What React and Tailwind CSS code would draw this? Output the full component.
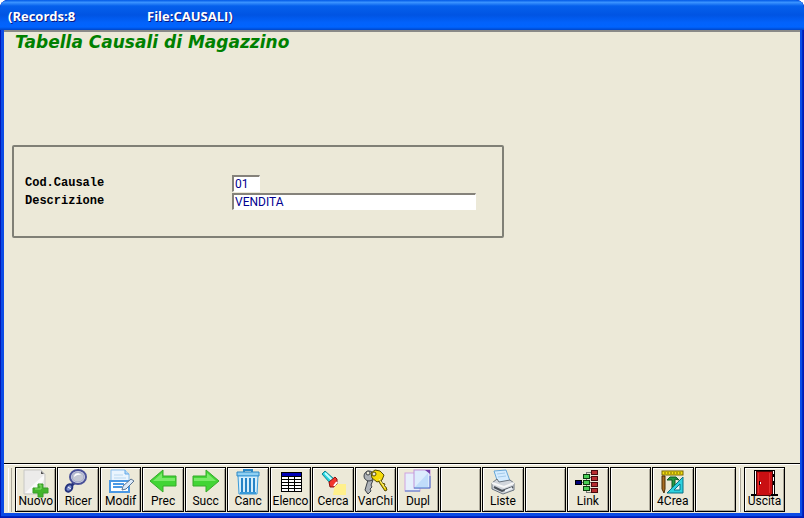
import React, { useState } from "react";

const icons = {
  nuovo: (
    <>
      <path d="M2 1h17l4 4v20H2z" fill="#ecebea" stroke="#c8c8c4" />
      <path d="M3 24h12L22 10V6l-9 8z" fill="#fafafa" />
      <path d="M19 2l3 3h-3z" fill="#555" />
      <path d="M16 15h5v4h5v5h-5v4h-5v-4h-5v-5h5z" fill="#43b52c" stroke="#3a9c28" />
      <path d="M17 16h2v4h-6" fill="none" stroke="#85dd6b" />
    </>
  ),
  ricer: (
    <>
      <path d="M11 13l-5 5" stroke="#27347e" strokeWidth="3" />
      <ellipse cx="5" cy="19" rx="3" ry="4" transform="rotate(35 5 19)" fill="#7d90d0" stroke="#25347c" strokeWidth="2" />
      <path d="M4 18l3 2" stroke="#fff" />
      <ellipse cx="14" cy="8" rx="8" ry="7" fill="#e8e8f0" stroke="#4a5298" strokeWidth="2" />
      <ellipse cx="14" cy="8" rx="6" ry="5" fill="#c4c8d4" stroke="#9aa2c8" />
      <path d="M10 8c0-4 5-5 7-2-4-1-5 1-7 2z" fill="#fff" />
    </>
  ),
  modif: (
    <>
      <path d="M4 1h14l4 4v18H4z" fill="#eaf5fe" stroke="#8cc0ee" />
      <path d="M18 1v4h4" fill="#b5d8f5" stroke="#62a9e8" />
      <path d="M7 6h9M7 9h12" stroke="#b9d8f0" />
      <rect x="3" y="12" width="19" height="11" fill="#fff" stroke="#4a98e4" strokeWidth="2" />
      <path d="M6 15h11M6 18h9" stroke="#4a98e4" strokeWidth="2" />
      <path d="M15 21l1-4 8-7 3 2-8 8z" fill="#dceafa" stroke="#5a7490" />
    </>
  ),
  prec: (
    <>
      <path d="M1 12L14 1v6h13v10H14v6z" fill="#42d535" stroke="#36aa2a" />
      <path d="M4 12l9-8v5h13v3z" fill="#7aea68" />
    </>
  ),
  succ: (
    <>
      <path d="M27 12L14 1v6H1v10h13v6z" fill="#42d535" stroke="#36aa2a" />
      <path d="M24 12l-9-8v5H2v3z" fill="#7aea68" />
    </>
  ),
  canc: (
    <>
      <path d="M10 3V1h8v2" fill="none" stroke="#2c87c4" strokeWidth="2" />
      <path d="M3 3h22v4H3z" fill="#8fd0f3" stroke="#2c87c4" />
      <path d="M4 7h20l-1 18H5z" fill="#d5effc" stroke="#3a9ad8" />
      <path d="M8 9v14M12 9v14M16 9v14M20 9v14" stroke="#2683c6" strokeWidth="2" />
      <path d="M6 24h16" stroke="#3a9ad8" strokeWidth="2" />
    </>
  ),
  elenco: (
    <g shapeRendering="crispEdges">
      <rect x="4" y="3" width="21" height="20" fill="#000" />
      <rect x="5" y="4" width="19" height="3" fill="#0000b8" />
      <path d="M5 8h6v2H5zM12 8h5v2h-5zM18 8h6v2h-6zM5 11h6v2H5zM12 11h5v2h-5zM18 11h6v2h-6zM5 14h6v2H5zM12 14h5v2h-5zM18 14h6v2h-6zM5 17h6v2H5zM12 17h5v2h-5zM18 17h6v2h-6zM5 20h6v2H5zM12 20h5v2h-5zM18 20h6v2h-6z" fill="#fff" />
    </g>
  ),
  cerca: (
    <>
      <path d="M16 15h11v11H14z" fill="#fff08c" />
      <path d="M3 5l3-3 9 8-4 4z" fill="#24d5e0" stroke="#16828c" />
      <path d="M6 4l8 8" stroke="#c2ffff" strokeWidth="2" />
      <path d="M10 13l6-5 2 2v5l-3 3h-4z" fill="#f2362c" stroke="#8b100c" />
      <path d="M15 17l3-4" stroke="#fff" strokeWidth="2" />
    </>
  ),
  varchi: (
    <>
      <path d="M7 11L4 21l3 4 3-3-1-2 2-2-1-2 2-5z" fill="#adb2b8" stroke="#3d4248" />
      <circle cx="8" cy="7" r="5" fill="#adb2b8" stroke="#3d4248" />
      <circle cx="7" cy="4" r="2" fill="#ecead8" stroke="#3d4248" />
      <path d="M16 10l8 12 2-1-1-3-2-1 1-2-3-1-1-4z" fill="#ecd000" stroke="#554b00" />
      <path d="M10 4l4-3 5 1 4 4-2 5-5 2-5-4z" fill="#f6dc08" stroke="#554b00" />
      <circle cx="13" cy="5" r="2" fill="#ecead8" stroke="#554b00" />
      <path d="M18 10l6 9" stroke="#fff38e" />
    </>
  ),
  dupl: (
    <>
      <rect x="1" y="4" width="15" height="18" fill="#e6effc" stroke="#d0a4e0" />
      <path d="M1 22h15" stroke="#4c7ac8" />
      <rect x="10" y="1" width="16" height="18" fill="#dcecfd" stroke="#c294d8" />
      <path d="M11 18L24 4v15H11z" fill="#c0dcfa" />
      <path d="M10 19h16V7" fill="none" stroke="#4977c8" />
      <path d="M21 1h5v4z" fill="#7340aa" />
    </>
  ),
  liste: (
    <>
      <path d="M5 2l12-1 4 11-12 2z" fill="#d4ecff" stroke="#67a7d8" />
      <path d="M8 5l8-1M9 8l8-1" stroke="#a4cbea" />
      <path d="M3 14l5-4 2 3 11-2 4 3v7l-11 4-11-5z" fill="#d2d6dc" stroke="#6b747e" />
      <path d="M3 14l12 4 10-4" fill="none" stroke="#f7f7f7" strokeWidth="2" />
      <path d="M5 18l8 4 11-4" stroke="#4a5058" strokeWidth="2" />
      <path d="M16 22l7-3" stroke="#eff4f8" strokeWidth="2" />
    </>
  ),
  link: (
    <g shapeRendering="crispEdges">
      <path d="M7 13h14M12 4v19h6M12 3h6M15 8h4M15 19h4" fill="none" stroke="#777" />
      <rect x="1" y="11" width="6" height="4" fill="#000078" stroke="#000" />
      <path d="M9 5h6v4H9zM9 11h6v4H9zM9 17h6v4H9z" fill="#49ce55" stroke="#083b0b" />
      <path d="M17 1h6v4h-6zM17 7h6v4h-6zM17 13h6v4h-6zM17 19h6v4h-6z" fill="#b82d30" stroke="#480b0d" />
    </g>
  ),
  crea: (
    <>
      <rect x="3" y="2" width="21" height="4" fill="#f2dc10" stroke="#776600" />
      <path d="M6 3v2M9 3v2M12 3v2M15 3v2M18 3v2M21 3v2" stroke="#776600" />
      <path d="M3 7h3v13l-1 4-2-4z" fill="#a86c22" stroke="#4b2b05" />
      <path d="M8 11l3-3h6l3 3-4-1v13h-3V11z" fill="#229743" stroke="#0b5923" />
      <path d="M8 24L24 8v16z" fill="#2ed1de" stroke="#0a7185" />
      <path d="M15 21l6-6v6z" fill="#e9f7f3" stroke="#0a7185" />
    </>
  ),
  uscita: (
    <g shapeRendering="crispEdges">
      <path d="M3 26V1h20v25" fill="#fff" stroke="#000" />
      <path d="M5 2h16v24H5z" fill="#c90f12" stroke="#4b0606" />
      <path d="M7 4v20M18 4v20" stroke="#e72e2e" />
      <path d="M0 26h5M20 26h7" stroke="#000" strokeWidth="2" />
      <path d="M8 12v4M22 5v3M22 12v4" stroke="#000" />
      <path d="M9 13h1v2H9z" fill="#fff" />
    </g>
  ),
};

const tools = [
  { label: "Nuovo", icon: "nuovo" },
  { label: "Ricer", icon: "ricer" },
  { label: "Modif", icon: "modif" },
  { label: "Prec", icon: "prec" },
  { label: "Succ", icon: "succ" },
  { label: "Canc", icon: "canc" },
  { label: "Elenco", icon: "elenco" },
  { label: "Cerca", icon: "cerca" },
  { label: "VarChi", icon: "varchi" },
  { label: "Dupl", icon: "dupl" },
  {},
  { label: "Liste", icon: "liste" },
  {},
  { label: "Link", icon: "link" },
  {},
  { label: "4Crea", icon: "crea" },
  {},
];

const ToolButton = ({ label, icon }) => (
  <button
    type="button"
    disabled={!label}
    className="flex h-[45px] w-full flex-col items-center border border-black bg-[#ece9d8] pt-px font-[Roboto,sans-serif] text-xs leading-3 text-black shadow-[inset_1px_1px_#fff,inset_-1px_-1px_#aca899]"
  >
    {icon && (
      <svg viewBox="0 0 28 29" className="-mb-[3px] h-[29px] w-7 shrink-0" fill="none" aria-hidden="true">
        {icons[icon]}
      </svg>
    )}
    {label && <span className="relative">{label}</span>}
  </button>
);

const Field = ({ id, label, value, onChange, inputClass }) => (
  <div className="grid h-[18px] grid-cols-[207px_1fr] items-center">
    <label htmlFor={id} className="font-['Liberation_Mono',monospace] text-xs font-bold text-black">
      {label}
    </label>
    <input
      id={id}
      value={value}
      onChange={(e) => onChange(e.target.value)}
      className={`h-[17px] border-t-2 border-r border-b border-l-2 border-t-[#85827a] border-r-white border-b-white border-l-[#85827a] bg-white px-px font-[Roboto,sans-serif] text-xs text-[#000090] outline-none ${inputClass}`}
    />
  </div>
);

const App = () => {
  const [codice, setCodice] = useState("01");
  const [descrizione, setDescrizione] = useState("VENDITA");

  return (
    <div className="flex h-screen flex-col overflow-hidden rounded-t-lg bg-[#0b4be6] shadow-[inset_0_0_0_1px_#0019b8,inset_-2px_-2px_#0028c0]">
      <header className="flex h-[30px] shrink-0 items-center bg-[linear-gradient(#0058e6_0%,#3a93ff_8%,#0560ec_20%,#0054e3_50%,#0262fb_75%,#0064ff_90%,#0046c8_100%)] px-2 pt-1 font-['Open_Sans',sans-serif] text-[13px] font-bold text-white [text-shadow:1px_1px_#0a1883]">
        <span className="w-[139px]">(Records:8</span>
        <span>File:CAUSALI)</span>
      </header>

      <div className="mx-1 mb-[5px] flex min-h-0 flex-1 flex-col border-t-2 border-[#8a8a88] bg-[#ece9d8]">
        <main className="flex-1 px-2">
          <h1 className="pl-[3px] font-['DejaVu_Sans',sans-serif] text-[17px] leading-5 font-bold text-[#008000] italic">
            Tabella Causali di Magazzino
          </h1>
          <form
            className="mt-[93px] h-[93px] max-w-[492px] rounded-xs border-2 border-[#808076] px-[11px] pt-[27px]"
            onSubmit={(e) => e.preventDefault()}
          >
            <Field id="codice" label="Cod.Causale" value={codice} onChange={setCodice} inputClass="w-7" />
            <Field
              id="descrizione"
              label="Descrizione"
              value={descrizione}
              onChange={setDescrizione}
              inputClass="w-full max-w-[244px]"
            />
          </form>
        </main>

        <footer className="flex h-[50px] shrink-0 items-start border-t border-black pr-[15px] pl-1 shadow-[inset_0_1px_#fff]">
          <div className="mt-1 mr-[3px] h-11 w-1 border-x border-white border-r-[#aca899]" />
          <div className="mt-[3px] grid flex-1 grid-cols-[repeat(17,minmax(0,1fr))] gap-px">
            {tools.map((tool, index) => (
              <ToolButton key={index} {...tool} />
            ))}
          </div>
          <div className="mx-[3px] mt-1 h-11 w-0.5 border-l border-white bg-[#aca899]" />
          <div className="mt-[3px] w-[41px]">
            <ToolButton label="Uscita" icon="uscita" />
          </div>
        </footer>
      </div>
    </div>
  );
};

export default App;
